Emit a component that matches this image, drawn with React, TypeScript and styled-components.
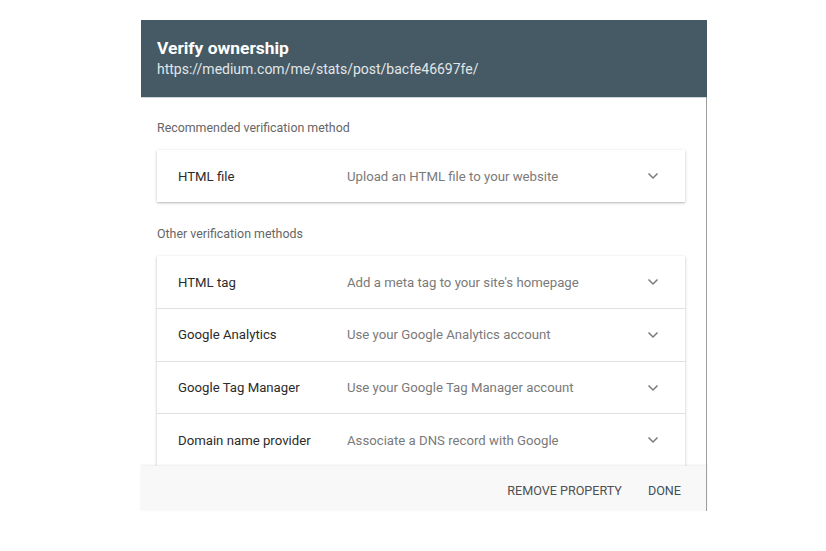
import React from 'react';
import styled, { createGlobalStyle } from 'styled-components';

const GlobalStyle = createGlobalStyle`
  html, body {
    margin: 0;
    padding: 0;
    background: #ffffff;
    font-family: Roboto, 'Liberation Sans', Arial, sans-serif;
  }
`;

const Page = styled.div`
  width: 826px;
  height: 551px;
  padding: 20px 0 0 141px;
  box-sizing: border-box;
  overflow: hidden;
`;

const Dialog = styled.div`
  width: 566px;
  display: flex;
  flex-direction: column;
  background: #ffffff;
`;

const Header = styled.div`
  height: 77px;
  box-sizing: border-box;
  padding: 17px 16px 0;
  background: #455a64;
  color: #ffffff;
  box-shadow: 0 1px 0 #c9d6dc;
`;

const Title = styled.div`
  font-size: 17.4px;
  font-weight: 700;
  line-height: 22px;
`;

const Url = styled.div`
  font-size: 14px;
  line-height: 20px;
  color: #e2e6e8;
`;

const Body = styled.div`
  height: 369px;
  box-sizing: border-box;
  overflow: hidden;
  padding: 21px 21px 0 16px;
  border-right: 1px solid #9e9e9e;
`;

const SectionLabel = styled.div`
  font-size: 12.4px;
  line-height: 20px;
  color: #666666;
  margin-bottom: 12px;
`;

const Card = styled.div<{ $spaced?: boolean }>`
  background: #ffffff;
  box-shadow: 0 1px 3px rgba(0, 0, 0, 0.22), 0 1px 1px rgba(0, 0, 0, 0.08);
  margin-bottom: ${(p) => (p.$spaced ? '22px' : '0')};
`;

const Row = styled.div`
  height: 51.7px;
  display: flex;
  align-items: center;
  padding: 0 26px 0 21px;
  font-size: 13.2px;
  border-top: 1px solid #e0e0e0;

  &:first-child {
    height: 52px;
    border-top: none;
  }
`;

const RowName = styled.div`
  width: 169px;
  color: #2b2b2b;
`;

const RowDesc = styled.div`
  flex: 1;
  color: #7a7a7a;
`;

const Chevron = styled.svg`
  width: 12px;
  height: 8px;
  flex-shrink: 0;
`;

const Footer = styled.div`
  height: 45px;
  display: flex;
  align-items: center;
  justify-content: flex-end;
  gap: 26px;
  padding: 3px 25px 0 0;
  box-sizing: border-box;
  background: #f8f8f8;
  border-right: 1px solid #9e9e9e;
  box-shadow: 0 -1px 2px rgba(0, 0, 0, 0.08);
  position: relative;
`;

const FooterButton = styled.div<{ $primary?: boolean }>`
  font-size: 12.6px;
  font-weight: 400;
  text-transform: uppercase;
  color: ${(p) => (p.$primary ? '#3d5059' : '#505050')};
`;

const ChevronIcon = () => (
  <Chevron viewBox="0 0 12 8">
    <path d="M1.5 1.5 6 6 10.5 1.5" fill="none" stroke="#7a7a7a" strokeWidth="1.5" />
  </Chevron>
);

const others = [
  { name: 'HTML tag', desc: "Add a meta tag to your site's homepage" },
  { name: 'Google Analytics', desc: 'Use your Google Analytics account' },
  { name: 'Google Tag Manager', desc: 'Use your Google Tag Manager account' },
  { name: 'Domain name provider', desc: 'Associate a DNS record with Google' },
];

export default function App() {
  return (
    <Page>
      <GlobalStyle />
      <Dialog>
        <Header>
          <Title>Verify ownership</Title>
          <Url>https://medium.com/me/stats/post/bacfe46697fe/</Url>
        </Header>
        <Body>
          <SectionLabel>Recommended verification method</SectionLabel>
          <Card $spaced>
            <Row>
              <RowName>HTML file</RowName>
              <RowDesc>Upload an HTML file to your website</RowDesc>
              <ChevronIcon />
            </Row>
          </Card>
          <SectionLabel>Other verification methods</SectionLabel>
          <Card>
            {others.map((m) => (
              <Row key={m.name}>
                <RowName>{m.name}</RowName>
                <RowDesc>{m.desc}</RowDesc>
                <ChevronIcon />
              </Row>
            ))}
          </Card>
        </Body>
        <Footer>
          <FooterButton>Remove property</FooterButton>
          <FooterButton $primary>Done</FooterButton>
        </Footer>
      </Dialog>
    </Page>
  );
}
